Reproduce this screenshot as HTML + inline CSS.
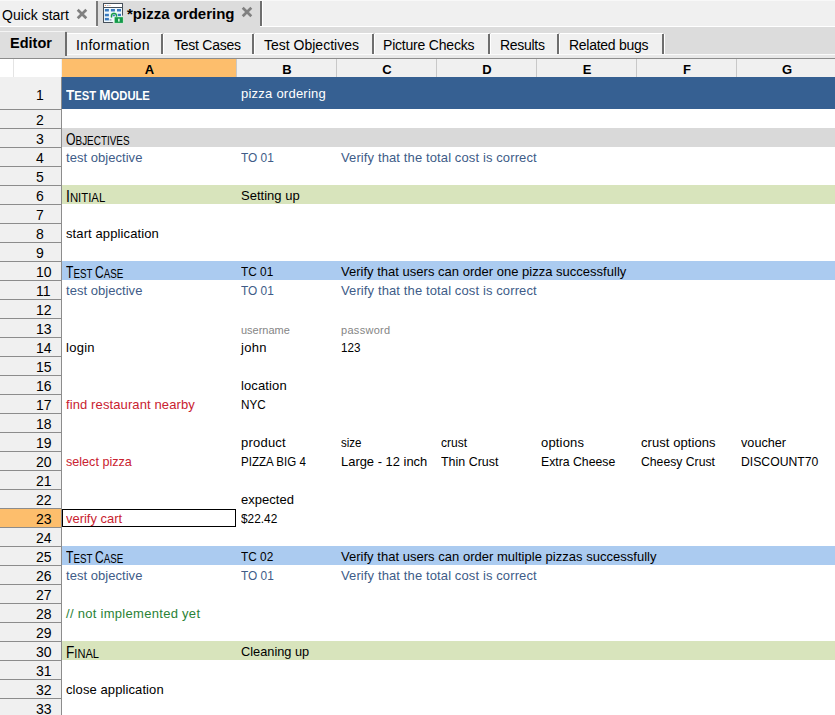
<!DOCTYPE html>
<html><head><meta charset="utf-8">
<style>
*{margin:0;padding:0;box-sizing:border-box}
html,body{width:835px;height:715px;overflow:hidden;background:#fff;font-family:"Liberation Sans",sans-serif;font-size:13px;color:#000}
.a{position:absolute}
.t{position:absolute;white-space:nowrap;line-height:16px;height:16px}
.sc{position:absolute;white-space:nowrap;line-height:20px;height:20px;transform-origin:0 0}
</style></head><body>
<div class="a" style="left:0px;top:0px;width:835px;height:26px;background:#f0f0f0;"></div>
<div class="a" style="left:0px;top:0px;width:835px;height:1px;background:#f8f8f8;"></div>
<div class="a" style="left:0px;top:26px;width:835px;height:1px;background:#ffffff;"></div>
<div class="a" style="left:0px;top:27px;width:835px;height:31px;background:#dcdcdc;"></div>
<div class="a" style="left:0px;top:54px;width:835px;height:1px;background:#fafafa;"></div>
<div class="a" style="left:0px;top:55px;width:835px;height:3px;background:#e8e8e8;"></div>
<div class="a" style="left:0px;top:58px;width:835px;height:1px;background:#8c8c8c;"></div>
<div class="t" style="left:2px;top:6px;font-size:14px;line-height:18px;height:18px">Quick start</div>
<svg class="a" style="left:76px;top:8px" width="12" height="12" viewBox="0 0 12 12"><path d="M1.7 1.7L10.3 10.3M10.3 1.7L1.7 10.3" stroke="#808080" stroke-width="2.7"/></svg>
<div class="a" style="left:96px;top:1px;width:2px;height:25px;background:#7a7a7a;"></div>
<div class="a" style="left:98px;top:1px;width:162px;height:26px;background:#dcdcdc;"></div>
<div class="a" style="left:260px;top:1px;width:2px;height:25px;background:#6e6e6e;"></div>
<div class="a" style="left:262px;top:1px;width:1px;height:25px;background:#ffffff;"></div>
<svg class="a" style="left:103px;top:3px" width="21" height="21" viewBox="0 0 21 21">
<rect x="1" y="1" width="18" height="18" fill="#eef8fd"/>
<rect x="1" y="1" width="18" height="3.4" fill="#fff"/>
<path d="M0 0.5H20M0.5 0V20M0 19.5H9.8M19.5 0V12.6M1 4.5H19" stroke="#46505a" stroke-width="1" fill="none"/>
<rect x="1.8" y="2" width="1.2" height="1" fill="#e07b39" opacity="0.8"/><rect x="3.8" y="2" width="1.8" height="1" fill="#7a9cc6" opacity="0.6"/><rect x="6.4" y="2" width="1.1" height="1" fill="#e07b39" opacity="0.6"/>
<g fill="#3a7bbf"><rect x="1.9" y="6" width="4" height="2.5"/><rect x="7.9" y="6" width="4" height="2.5"/><rect x="14" y="6" width="4" height="2.5"/>
<rect x="1.9" y="10.8" width="4" height="2.5"/><rect x="7.9" y="10.8" width="4" height="2.5"/><rect x="14.6" y="10.8" width="3.4" height="2.3"/>
<rect x="1.9" y="14.9" width="4" height="2.5"/><rect x="6.5" y="16.2" width="2" height="1.4" fill="#9aa8c0"/></g>
<path d="M8.5 14.6 V12.8 A2.5 2.5 0 0 1 13.5 12.8 V14.4" fill="none" stroke="#c8f2d2" stroke-width="2.3"/>
<path d="M8.5 14.6 V12.8 A2.5 2.5 0 0 1 13.5 12.8 V14.4" fill="none" stroke="#17984a" stroke-width="1.25"/>
<rect x="11.2" y="13.7" width="9.2" height="6.7" fill="#c8f2d2"/>
<rect x="11.7" y="14.2" width="8.2" height="5.7" fill="#14994a"/>
<rect x="15" y="15.7" width="1.7" height="2.9" fill="#c9f5d8"/>
</svg>

<div class="t" style="left:127px;top:5px;font-weight:bold;font-size:15px;line-height:18px;height:18px">*pizza ordering</div>
<svg class="a" style="left:241px;top:6px" width="12" height="12" viewBox="0 0 12 12"><path d="M1.7 1.7L10.3 10.3M10.3 1.7L1.7 10.3" stroke="#808080" stroke-width="2.7"/></svg>
<div class="a" style="left:0px;top:31px;width:65px;height:1px;background:#f4f4f4;"></div>
<div class="a" style="left:0px;top:32px;width:65px;height:26px;background:#dedede;"></div>
<div class="a" style="left:65px;top:32px;width:2px;height:24px;background:#6e6e6e;"></div>
<div class="t" style="left:10px;top:34px;font-weight:bold;font-size:14.5px;line-height:18px;height:18px">Editor</div>
<div class="a" style="left:67px;top:33px;width:95px;height:1px;background:#ffffff;"></div>
<div class="a" style="left:67px;top:34px;width:95px;height:20px;background:#f0f0f0;"></div>
<div class="a" style="left:161px;top:34px;width:2px;height:20px;background:#6e6e6e;"></div>
<div class="a" style="left:163px;top:34px;width:1px;height:20px;background:#ffffff;"></div>
<div class="t" style="left:76px;top:36px;font-size:14px;line-height:18px;height:18px;letter-spacing:0.35px">Information</div>
<div class="a" style="left:164px;top:33px;width:89px;height:1px;background:#ffffff;"></div>
<div class="a" style="left:164px;top:34px;width:89px;height:20px;background:#f0f0f0;"></div>
<div class="a" style="left:252px;top:34px;width:2px;height:20px;background:#6e6e6e;"></div>
<div class="a" style="left:254px;top:34px;width:1px;height:20px;background:#ffffff;"></div>
<div class="t" style="left:174px;top:36px;font-size:14px;line-height:18px;height:18px;letter-spacing:-0.25px">Test Cases</div>
<div class="a" style="left:255px;top:33px;width:118px;height:1px;background:#ffffff;"></div>
<div class="a" style="left:255px;top:34px;width:118px;height:20px;background:#f0f0f0;"></div>
<div class="a" style="left:372px;top:34px;width:2px;height:20px;background:#6e6e6e;"></div>
<div class="a" style="left:374px;top:34px;width:1px;height:20px;background:#ffffff;"></div>
<div class="t" style="left:264px;top:36px;font-size:14px;line-height:18px;height:18px;letter-spacing:0px">Test Objectives</div>
<div class="a" style="left:375px;top:33px;width:114px;height:1px;background:#ffffff;"></div>
<div class="a" style="left:375px;top:34px;width:114px;height:20px;background:#f0f0f0;"></div>
<div class="a" style="left:488px;top:34px;width:2px;height:20px;background:#6e6e6e;"></div>
<div class="a" style="left:490px;top:34px;width:1px;height:20px;background:#ffffff;"></div>
<div class="t" style="left:383px;top:36px;font-size:14px;line-height:18px;height:18px;letter-spacing:-0.2px">Picture Checks</div>
<div class="a" style="left:491px;top:33px;width:67px;height:1px;background:#ffffff;"></div>
<div class="a" style="left:491px;top:34px;width:67px;height:20px;background:#f0f0f0;"></div>
<div class="a" style="left:557px;top:34px;width:2px;height:20px;background:#6e6e6e;"></div>
<div class="a" style="left:559px;top:34px;width:1px;height:20px;background:#ffffff;"></div>
<div class="t" style="left:500px;top:36px;font-size:14px;line-height:18px;height:18px;letter-spacing:-0.3px">Results</div>
<div class="a" style="left:560px;top:33px;width:103px;height:1px;background:#ffffff;"></div>
<div class="a" style="left:560px;top:34px;width:103px;height:20px;background:#f0f0f0;"></div>
<div class="a" style="left:662px;top:34px;width:2px;height:20px;background:#6e6e6e;"></div>
<div class="a" style="left:664px;top:34px;width:1px;height:20px;background:#ffffff;"></div>
<div class="t" style="left:569px;top:36px;font-size:14px;line-height:18px;height:18px;letter-spacing:-0.27px">Related bugs</div>
<div class="a" style="left:0px;top:59px;width:835px;height:18px;background:#f0f0f0;"></div>
<div class="a" style="left:0px;top:59px;width:61px;height:18px;background:#ffffff;"></div>
<div class="a" style="left:13px;top:59px;width:1px;height:18px;background:#e4e4e4;"></div>
<div class="a" style="left:62px;top:59px;width:175px;height:18px;background:#fdbe6c;"></div>
<div class="a" style="left:236px;top:59px;width:1px;height:18px;background:#c8c8c8;"></div>
<div class="a" style="left:336px;top:59px;width:1px;height:18px;background:#c8c8c8;"></div>
<div class="a" style="left:436px;top:59px;width:1px;height:18px;background:#c8c8c8;"></div>
<div class="a" style="left:536px;top:59px;width:1px;height:18px;background:#c8c8c8;"></div>
<div class="a" style="left:636px;top:59px;width:1px;height:18px;background:#c8c8c8;"></div>
<div class="a" style="left:736px;top:59px;width:1px;height:18px;background:#c8c8c8;"></div>
<div class="t" style="left:62px;top:62px;width:175px;text-align:center;font-weight:bold;font-size:13px">A</div>
<div class="t" style="left:237px;top:62px;width:100px;text-align:center;font-weight:bold;font-size:13px">B</div>
<div class="t" style="left:337px;top:62px;width:100px;text-align:center;font-weight:bold;font-size:13px">C</div>
<div class="t" style="left:437px;top:62px;width:100px;text-align:center;font-weight:bold;font-size:13px">D</div>
<div class="t" style="left:537px;top:62px;width:100px;text-align:center;font-weight:bold;font-size:13px">E</div>
<div class="t" style="left:637px;top:62px;width:100px;text-align:center;font-weight:bold;font-size:13px">F</div>
<div class="t" style="left:737px;top:62px;width:100px;text-align:center;font-weight:bold;font-size:13px">G</div>
<div class="a" style="left:0px;top:77px;width:61px;height:638px;background:#f0f0f0;"></div>
<div class="a" style="left:61px;top:77px;width:1px;height:638px;background:#8c8c8c;"></div>
<div class="t" style="left:36px;top:87px;font-size:14px">1</div>
<div class="a" style="left:0px;top:109px;width:61px;height:1px;background:#8c8c8c;"></div>
<div class="t" style="left:36px;top:112px;font-size:14px">2</div>
<div class="a" style="left:0px;top:128px;width:61px;height:1px;background:#8c8c8c;"></div>
<div class="t" style="left:36px;top:131px;font-size:14px">3</div>
<div class="a" style="left:0px;top:147px;width:61px;height:1px;background:#8c8c8c;"></div>
<div class="t" style="left:36px;top:150px;font-size:14px">4</div>
<div class="a" style="left:0px;top:166px;width:61px;height:1px;background:#8c8c8c;"></div>
<div class="t" style="left:36px;top:169px;font-size:14px">5</div>
<div class="a" style="left:0px;top:185px;width:61px;height:1px;background:#8c8c8c;"></div>
<div class="t" style="left:36px;top:188px;font-size:14px">6</div>
<div class="a" style="left:0px;top:204px;width:61px;height:1px;background:#8c8c8c;"></div>
<div class="t" style="left:36px;top:207px;font-size:14px">7</div>
<div class="a" style="left:0px;top:223px;width:61px;height:1px;background:#8c8c8c;"></div>
<div class="t" style="left:36px;top:226px;font-size:14px">8</div>
<div class="a" style="left:0px;top:242px;width:61px;height:1px;background:#8c8c8c;"></div>
<div class="t" style="left:36px;top:245px;font-size:14px">9</div>
<div class="a" style="left:0px;top:261px;width:61px;height:1px;background:#8c8c8c;"></div>
<div class="t" style="left:36px;top:264px;font-size:14px">10</div>
<div class="a" style="left:0px;top:280px;width:61px;height:1px;background:#8c8c8c;"></div>
<div class="t" style="left:36px;top:283px;font-size:14px">11</div>
<div class="a" style="left:0px;top:299px;width:61px;height:1px;background:#8c8c8c;"></div>
<div class="t" style="left:36px;top:302px;font-size:14px">12</div>
<div class="a" style="left:0px;top:318px;width:61px;height:1px;background:#8c8c8c;"></div>
<div class="t" style="left:36px;top:321px;font-size:14px">13</div>
<div class="a" style="left:0px;top:337px;width:61px;height:1px;background:#8c8c8c;"></div>
<div class="t" style="left:36px;top:340px;font-size:14px">14</div>
<div class="a" style="left:0px;top:356px;width:61px;height:1px;background:#8c8c8c;"></div>
<div class="t" style="left:36px;top:359px;font-size:14px">15</div>
<div class="a" style="left:0px;top:375px;width:61px;height:1px;background:#8c8c8c;"></div>
<div class="t" style="left:36px;top:378px;font-size:14px">16</div>
<div class="a" style="left:0px;top:394px;width:61px;height:1px;background:#8c8c8c;"></div>
<div class="t" style="left:36px;top:397px;font-size:14px">17</div>
<div class="a" style="left:0px;top:413px;width:61px;height:1px;background:#8c8c8c;"></div>
<div class="t" style="left:36px;top:416px;font-size:14px">18</div>
<div class="a" style="left:0px;top:432px;width:61px;height:1px;background:#8c8c8c;"></div>
<div class="t" style="left:36px;top:435px;font-size:14px">19</div>
<div class="a" style="left:0px;top:451px;width:61px;height:1px;background:#8c8c8c;"></div>
<div class="t" style="left:36px;top:454px;font-size:14px">20</div>
<div class="a" style="left:0px;top:470px;width:61px;height:1px;background:#8c8c8c;"></div>
<div class="t" style="left:36px;top:473px;font-size:14px">21</div>
<div class="a" style="left:0px;top:489px;width:61px;height:1px;background:#8c8c8c;"></div>
<div class="t" style="left:36px;top:492px;font-size:14px">22</div>
<div class="a" style="left:0px;top:509px;width:61px;height:18px;background:#fdbe6c;"></div>
<div class="a" style="left:0px;top:508px;width:61px;height:1px;background:#8c8c8c;"></div>
<div class="t" style="left:36px;top:511px;font-size:14px">23</div>
<div class="a" style="left:0px;top:527px;width:61px;height:1px;background:#8c8c8c;"></div>
<div class="t" style="left:36px;top:530px;font-size:14px">24</div>
<div class="a" style="left:0px;top:546px;width:61px;height:1px;background:#8c8c8c;"></div>
<div class="t" style="left:36px;top:549px;font-size:14px">25</div>
<div class="a" style="left:0px;top:565px;width:61px;height:1px;background:#8c8c8c;"></div>
<div class="t" style="left:36px;top:568px;font-size:14px">26</div>
<div class="a" style="left:0px;top:584px;width:61px;height:1px;background:#8c8c8c;"></div>
<div class="t" style="left:36px;top:587px;font-size:14px">27</div>
<div class="a" style="left:0px;top:603px;width:61px;height:1px;background:#8c8c8c;"></div>
<div class="t" style="left:36px;top:606px;font-size:14px">28</div>
<div class="a" style="left:0px;top:622px;width:61px;height:1px;background:#8c8c8c;"></div>
<div class="t" style="left:36px;top:625px;font-size:14px">29</div>
<div class="a" style="left:0px;top:641px;width:61px;height:1px;background:#8c8c8c;"></div>
<div class="t" style="left:36px;top:644px;font-size:14px">30</div>
<div class="a" style="left:0px;top:660px;width:61px;height:1px;background:#8c8c8c;"></div>
<div class="t" style="left:36px;top:663px;font-size:14px">31</div>
<div class="a" style="left:0px;top:679px;width:61px;height:1px;background:#8c8c8c;"></div>
<div class="t" style="left:36px;top:682px;font-size:14px">32</div>
<div class="a" style="left:0px;top:698px;width:61px;height:1px;background:#8c8c8c;"></div>
<div class="t" style="left:36px;top:701px;font-size:14px">33</div>
<div class="a" style="left:62px;top:77px;width:773px;height:32px;background:#366092;"></div>
<div class="a" style="left:62px;top:128px;width:773px;height:19px;background:#d9d9d9;"></div>
<div class="a" style="left:62px;top:185px;width:773px;height:19px;background:#d8e4bc;"></div>
<div class="a" style="left:62px;top:261px;width:773px;height:19px;background:#abcbf0;"></div>
<div class="a" style="left:62px;top:546px;width:773px;height:19px;background:#abcbf0;"></div>
<div class="a" style="left:62px;top:641px;width:773px;height:19px;background:#d8e4bc;"></div>
<div class="a" style="left:62px;top:509px;width:174px;height:18px;background:transparent;border:1px solid #000"></div>
<div class="sc" style="left:66px;top:85px;color:#fff;transform:scaleX(0.898);font-weight:bold;"><span style="font-size:15px">T</span><span style="font-size:12.5px">EST</span> <span style="font-size:15px">M</span><span style="font-size:12.5px">ODULE</span></div>
<div class="sc" style="left:66px;top:129px;color:#000;transform:scaleX(0.741);"><span style="font-size:16.5px">O</span><span style="font-size:13.4px">BJECTIVES</span></div>
<div class="sc" style="left:66px;top:186px;color:#000;transform:scaleX(0.849);"><span style="font-size:16.5px">I</span><span style="font-size:13.4px">NITIAL</span></div>
<div class="sc" style="left:66px;top:262px;color:#000;transform:scaleX(0.731);"><span style="font-size:16.5px">T</span><span style="font-size:13.4px">EST</span> <span style="font-size:16.5px">C</span><span style="font-size:13.4px">ASE</span></div>
<div class="sc" style="left:66px;top:547px;color:#000;transform:scaleX(0.731);"><span style="font-size:16.5px">T</span><span style="font-size:13.4px">EST</span> <span style="font-size:16.5px">C</span><span style="font-size:13.4px">ASE</span></div>
<div class="sc" style="left:66px;top:642px;color:#000;transform:scaleX(0.828);"><span style="font-size:16.5px">F</span><span style="font-size:13.4px">INAL</span></div>
<div class="t" style="left:241px;top:86px;color:#ffffff;letter-spacing:0.238px;">pizza ordering</div>
<div class="t" style="left:66px;top:150px;color:#405c88;letter-spacing:0.038px;">test objective</div>
<div class="t" style="left:241px;top:150px;color:#405c88;transform:scaleX(0.9139);transform-origin:0 0;">TO 01</div>
<div class="t" style="left:341px;top:150px;color:#405c88;letter-spacing:0.117px;">Verify that the total cost is correct</div>
<div class="t" style="left:241px;top:188px;color:#000000;letter-spacing:0.011px;">Setting up</div>
<div class="t" style="left:66px;top:226px;color:#000000;letter-spacing:0.106px;">start application</div>
<div class="t" style="left:241px;top:264px;color:#000000;transform:scaleX(0.9114);transform-origin:0 0;">TC 01</div>
<div class="t" style="left:341px;top:264px;color:#000000;letter-spacing:0.012px;">Verify that users can order one pizza successfully</div>
<div class="t" style="left:66px;top:283px;color:#405c88;letter-spacing:0.038px;">test objective</div>
<div class="t" style="left:241px;top:283px;color:#405c88;transform:scaleX(0.9139);transform-origin:0 0;">TO 01</div>
<div class="t" style="left:341px;top:283px;color:#405c88;letter-spacing:0.117px;">Verify that the total cost is correct</div>
<div class="t" style="left:241px;top:322px;color:#858585;font-size:11px;transform:scaleX(0.998);transform-origin:0 0;">username</div>
<div class="t" style="left:341px;top:322px;color:#858585;font-size:11px;letter-spacing:0.300px;">password</div>
<div class="t" style="left:66px;top:340px;color:#000000;letter-spacing:0.275px;">login</div>
<div class="t" style="left:241px;top:340px;color:#000000;letter-spacing:0.333px;">john</div>
<div class="t" style="left:341px;top:340px;color:#000000;transform:scaleX(0.8955);transform-origin:0 0;">123</div>
<div class="t" style="left:241px;top:378px;color:#000000;letter-spacing:0.114px;">location</div>
<div class="t" style="left:66px;top:397px;color:#c92230;letter-spacing:0.110px;">find restaurant nearby</div>
<div class="t" style="left:241px;top:397px;color:#000000;transform:scaleX(0.9);transform-origin:0 0;">NYC</div>
<div class="t" style="left:241px;top:435px;color:#000000;letter-spacing:0.217px;">product</div>
<div class="t" style="left:341px;top:435px;color:#000000;transform:scaleX(0.887);transform-origin:0 0;">size</div>
<div class="t" style="left:441px;top:435px;color:#000000;transform:scaleX(0.9241);transform-origin:0 0;">crust</div>
<div class="t" style="left:541px;top:435px;color:#000000;letter-spacing:0.183px;">options</div>
<div class="t" style="left:641px;top:435px;color:#000000;letter-spacing:0.075px;">crust options</div>
<div class="t" style="left:741px;top:435px;color:#000000;transform:scaleX(0.9745);transform-origin:0 0;">voucher</div>
<div class="t" style="left:66px;top:454px;color:#c92230;transform:scaleX(0.9691);transform-origin:0 0;">select pizza</div>
<div class="t" style="left:241px;top:454px;color:#000000;transform:scaleX(0.889);transform-origin:0 0;">PIZZA BIG 4</div>
<div class="t" style="left:341px;top:454px;color:#000000;transform:scaleX(0.9942);transform-origin:0 0;">Large - 12 inch</div>
<div class="t" style="left:441px;top:454px;color:#000000;transform:scaleX(0.9567);transform-origin:0 0;">Thin Crust</div>
<div class="t" style="left:541px;top:454px;color:#000000;transform:scaleX(0.943);transform-origin:0 0;">Extra Cheese</div>
<div class="t" style="left:641px;top:454px;color:#000000;transform:scaleX(0.9392);transform-origin:0 0;">Cheesy Crust</div>
<div class="t" style="left:741px;top:454px;color:#000000;transform:scaleX(0.939);transform-origin:0 0;">DISCOUNT70</div>
<div class="t" style="left:241px;top:492px;color:#000000;letter-spacing:0.014px;">expected</div>
<div class="t" style="left:66px;top:511px;color:#c92230;transform:scaleX(0.9965);transform-origin:0 0;">verify cart</div>
<div class="t" style="left:241px;top:511px;color:#000000;transform:scaleX(0.9125);transform-origin:0 0;">$22.42</div>
<div class="t" style="left:241px;top:549px;color:#000000;transform:scaleX(0.9114);transform-origin:0 0;">TC 02</div>
<div class="t" style="left:341px;top:549px;color:#000000;letter-spacing:0.022px;">Verify that users can order multiple pizzas successfully</div>
<div class="t" style="left:66px;top:568px;color:#405c88;letter-spacing:0.038px;">test objective</div>
<div class="t" style="left:241px;top:568px;color:#405c88;transform:scaleX(0.9139);transform-origin:0 0;">TO 01</div>
<div class="t" style="left:341px;top:568px;color:#405c88;letter-spacing:0.117px;">Verify that the total cost is correct</div>
<div class="t" style="left:66px;top:606px;color:#2a8236;letter-spacing:0.290px;">// not implemented yet</div>
<div class="t" style="left:241px;top:644px;color:#000000;transform:scaleX(0.9826);transform-origin:0 0;">Cleaning up</div>
<div class="t" style="left:66px;top:682px;color:#000000;letter-spacing:0.094px;">close application</div>
</body></html>
